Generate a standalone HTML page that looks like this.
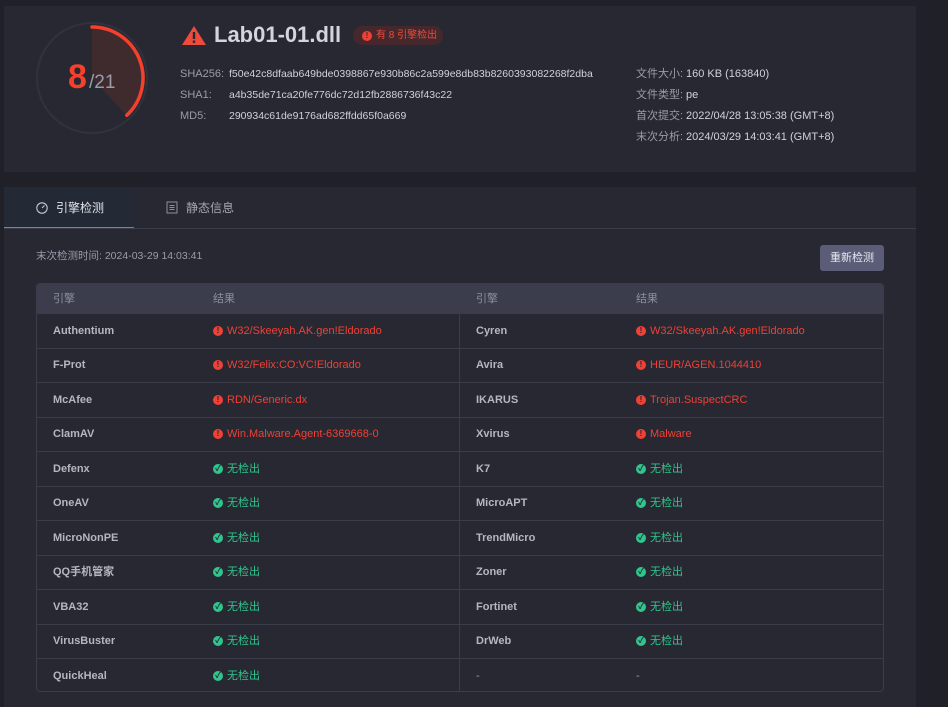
<!DOCTYPE html>
<html><head><meta charset="utf-8"><style>
*{margin:0;padding:0;box-sizing:border-box}
body{width:948px;height:707px;background:#1f2028;font-family:"Liberation Sans","Noto Sans CJK SC",sans-serif;color:#d0d2da;position:relative;overflow:hidden;font-size:11px;line-height:14px}
.abs{position:absolute;white-space:nowrap;line-height:14px;height:14px}
.top{position:absolute;left:4px;top:6px;width:912px;height:166px;background:#272832}
.main{position:absolute;left:4px;top:187px;width:912px;height:520px;background:#272832}
.lbl{color:#9a9cab}
.tbl{position:absolute;left:36px;top:283px;width:848px;height:409px;border:1px solid #3a3c4a;border-radius:4px;overflow:hidden}
.th{position:absolute;left:0;top:0;width:100%;height:29px;background:#3b3d4d;color:#8d8fa0}
.row{position:absolute;left:0;width:100%;height:34.5px;border-top:1px solid #3a3c4a}
.row span{position:absolute;top:0;height:100%;display:flex;align-items:center;white-space:nowrap;line-height:14px}
.eng{font-weight:bold;color:#b4b6c2}
.bad{color:#ef4136}
.ok{color:#2fc58d}
.ic{display:inline-block;width:10px;height:10px;border-radius:50%;margin-right:4px;color:#272832;font-size:8px;line-height:10px;text-align:center;font-weight:bold;font-style:normal;flex:none}
.icb{background:#ef4136}.ico{background:#2fc58d}
.vsep{position:absolute;left:422px;top:29px;width:1px;height:380px;background:#3a3c4a}
.flex{display:flex;align-items:center}
</style></head><body>
<div class="top"></div>
<svg class="abs" style="left:0;top:0;height:170px" width="200" height="170">
<circle cx="92" cy="78" r="55" fill="none" stroke="#30323e" stroke-width="2"/>
<path d="M92 78 L92 25 A53 53 0 0 1 128.1 116.8 Z" fill="#3f2b2e"/>
<path d="M92 27 A51 51 0 0 1 126.8 115.3" fill="none" stroke="#f4402c" stroke-width="3.5" stroke-linecap="round"/>
</svg>
<div class="abs" style="left:68px;top:60px;font-size:34px;font-weight:bold;color:#f4402c;line-height:34px;height:34px">8</div>
<div class="abs" style="left:89px;top:73px;font-size:19px;color:#9a9cab;line-height:19px;height:19px">/21</div>
<svg class="abs" style="left:181px;top:25px;height:20px" width="26" height="20"><path d="M13 1 L25 20 L1 20 Z" fill="#ef4a3c"/><rect x="11.8" y="7" width="2.4" height="7" fill="#272832"/><rect x="11.8" y="15.5" width="2.4" height="2.4" fill="#272832"/></svg>
<div class="abs" style="left:214px;top:23px;font-size:22px;font-weight:bold;color:#d4d5dc;line-height:24px;height:24px">Lab01-01.dll</div>
<div class="abs flex" style="left:353px;top:26px;width:90px;height:19px;border-radius:10px;background:#46282c;color:#ef4a3c;font-size:10px;padding-left:9px"><i class="ic icb" style="color:#46282c">!</i>有 8 引擎检出</div>
<div class="abs lbl" style="left:180px;top:67px">SHA256:</div><div class="abs" style="left:229px;top:67px;font-size:10.5px">f50e42c8dfaab649bde0398867e930b86c2a599e8db83b8260393082268f2dba</div>
<div class="abs lbl" style="left:180px;top:88px">SHA1:</div><div class="abs" style="left:229px;top:88px;font-size:10.5px">a4b35de71ca20fe776dc72d12fb2886736f43c22</div>
<div class="abs lbl" style="left:180px;top:109px">MD5:</div><div class="abs" style="left:229px;top:109px;font-size:10.5px">290934c61de9176ad682ffdd65f0a669</div>
<div class="abs lbl" style="left:636px;top:67px">文件大小:</div><div class="abs" style="left:686px;top:67px">160 KB (163840)</div>
<div class="abs lbl" style="left:636px;top:88px">文件类型:</div><div class="abs" style="left:686px;top:88px">pe</div>
<div class="abs lbl" style="left:636px;top:109px">首次提交:</div><div class="abs" style="left:686px;top:109px">2022/04/28 13:05:38 (GMT+8)</div>
<div class="abs lbl" style="left:636px;top:130px">末次分析:</div><div class="abs" style="left:686px;top:130px">2024/03/29 14:03:41 (GMT+8)</div>

<div class="main"></div>
<div class="abs" style="left:4px;top:188px;width:130px;height:40px;background:#232935"></div>
<div class="abs" style="left:4px;top:227px;width:130px;height:2px;background:#2a9fd6"></div>
<div class="abs" style="left:4px;top:228px;width:912px;height:1px;background:#3a3c4a"></div>
<svg class="abs" style="left:36px;top:202px;height:12px" width="12" height="12"><circle cx="6" cy="6" r="5.2" fill="none" stroke="#c8cad2" stroke-width="1.1"/><path d="M6 6 L8.5 3.5" stroke="#c8cad2" stroke-width="1.1"/></svg>
<div class="abs" style="left:56px;top:201px;font-size:12px;color:#e2e3e8">引擎检测</div>
<svg class="abs" style="left:166px;top:201px;height:13px" width="12" height="13"><rect x="1" y="1" width="10" height="11" fill="none" stroke="#8d8fa0"/><path d="M3.5 4.5h5M3.5 6.5h5M3.5 8.5h5" stroke="#8d8fa0"/></svg>
<div class="abs" style="left:186px;top:201px;font-size:12px;color:#a5a7b3">静态信息</div>
<div class="abs lbl" style="left:36px;top:249px;font-size:10.5px">末次检测时间: 2024-03-29 14:03:41</div>
<div class="abs" style="left:820px;top:245px;width:64px;height:26px;background:#5a5c78;border-radius:3px;color:#e8e9ef;text-align:center;line-height:26px;font-size:11px">重新检测</div>

<div class="tbl">
<div class="th"><span class="abs" style="left:16px;top:8px">引擎</span><span class="abs" style="left:176px;top:8px">结果</span><span class="abs" style="left:439px;top:8px">引擎</span><span class="abs" style="left:599px;top:8px">结果</span></div>
<div class="vsep"></div>
<div class="row" style="top:29px"><span class="eng" style="left:16px">Authentium</span><span class="bad" style="left:176px"><i class="ic icb">!</i>W32/Skeeyah.AK.gen!Eldorado</span><span class="eng" style="left:439px">Cyren</span><span class="bad" style="left:599px"><i class="ic icb">!</i>W32/Skeeyah.AK.gen!Eldorado</span></div>
<div class="row" style="top:63.5px"><span class="eng" style="left:16px">F-Prot</span><span class="bad" style="left:176px"><i class="ic icb">!</i>W32/Felix:CO:VC!Eldorado</span><span class="eng" style="left:439px">Avira</span><span class="bad" style="left:599px"><i class="ic icb">!</i>HEUR/AGEN.1044410</span></div>
<div class="row" style="top:98px"><span class="eng" style="left:16px">McAfee</span><span class="bad" style="left:176px"><i class="ic icb">!</i>RDN/Generic.dx</span><span class="eng" style="left:439px">IKARUS</span><span class="bad" style="left:599px"><i class="ic icb">!</i>Trojan.SuspectCRC</span></div>
<div class="row" style="top:132.5px"><span class="eng" style="left:16px">ClamAV</span><span class="bad" style="left:176px"><i class="ic icb">!</i>Win.Malware.Agent-6369668-0</span><span class="eng" style="left:439px">Xvirus</span><span class="bad" style="left:599px"><i class="ic icb">!</i>Malware</span></div>
<div class="row" style="top:167px"><span class="eng" style="left:16px">Defenx</span><span class="ok" style="left:176px"><i class="ic ico">✓</i>无检出</span><span class="eng" style="left:439px">K7</span><span class="ok" style="left:599px"><i class="ic ico">✓</i>无检出</span></div>
<div class="row" style="top:201.5px"><span class="eng" style="left:16px">OneAV</span><span class="ok" style="left:176px"><i class="ic ico">✓</i>无检出</span><span class="eng" style="left:439px">MicroAPT</span><span class="ok" style="left:599px"><i class="ic ico">✓</i>无检出</span></div>
<div class="row" style="top:236px"><span class="eng" style="left:16px">MicroNonPE</span><span class="ok" style="left:176px"><i class="ic ico">✓</i>无检出</span><span class="eng" style="left:439px">TrendMicro</span><span class="ok" style="left:599px"><i class="ic ico">✓</i>无检出</span></div>
<div class="row" style="top:270.5px"><span class="eng" style="left:16px">QQ手机管家</span><span class="ok" style="left:176px"><i class="ic ico">✓</i>无检出</span><span class="eng" style="left:439px">Zoner</span><span class="ok" style="left:599px"><i class="ic ico">✓</i>无检出</span></div>
<div class="row" style="top:305px"><span class="eng" style="left:16px">VBA32</span><span class="ok" style="left:176px"><i class="ic ico">✓</i>无检出</span><span class="eng" style="left:439px">Fortinet</span><span class="ok" style="left:599px"><i class="ic ico">✓</i>无检出</span></div>
<div class="row" style="top:339.5px"><span class="eng" style="left:16px">VirusBuster</span><span class="ok" style="left:176px"><i class="ic ico">✓</i>无检出</span><span class="eng" style="left:439px">DrWeb</span><span class="ok" style="left:599px"><i class="ic ico">✓</i>无检出</span></div>
<div class="row" style="top:374px"><span class="eng" style="left:16px">QuickHeal</span><span class="ok" style="left:176px"><i class="ic ico">✓</i>无检出</span><span class="lbl" style="left:439px">-</span><span class="lbl" style="left:599px">-</span></div>
</div>
</body></html>
